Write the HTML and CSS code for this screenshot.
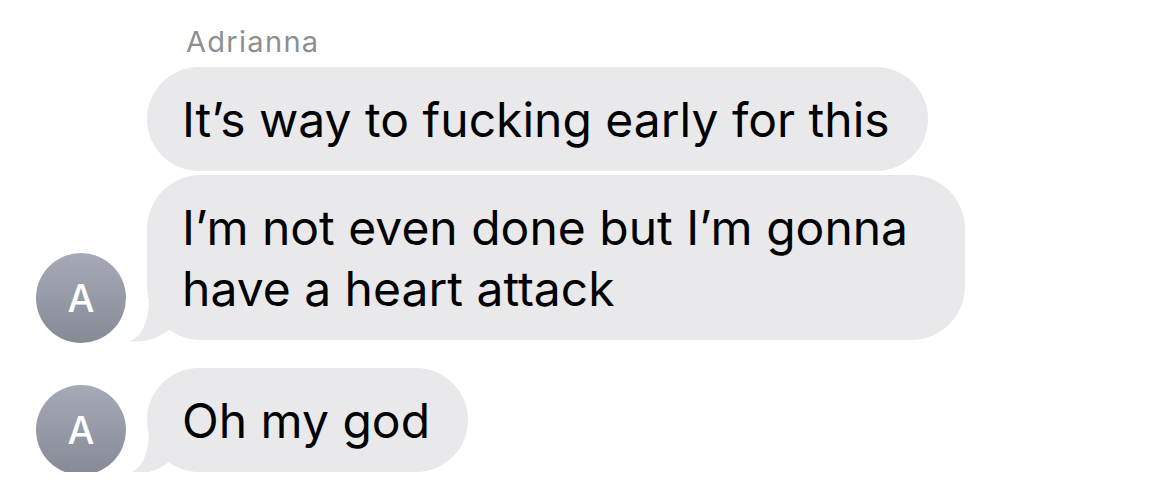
FILE: index.html
```html
<!DOCTYPE html>
<html lang="en">
<head>
<meta charset="utf-8">
<title>Messages</title>
<link rel="stylesheet" href="styles.css">
</head>
<body>
<div class="chat">
  <div class="sender">Adrianna</div>
  <div class="row">
    <div class="avatar-slot"></div>
    <div class="bubble">It’s way to fucking early for this</div>
  </div>
  <div class="row row-tight">
    <div class="avatar">A</div>
    <div class="bubble has-tail">I’m not even done but I’m gonna have a heart attack
      <svg class="tail" width="60" height="70" viewBox="-20 -62 60 70"><path d="M2 -62 L2 -44 C2 -17 -5 -4 -17 1 C-3 3 10 -1 22 -10 L22 -62 Z"/></svg>
    </div>
  </div>
  <div class="row row-gap">
    <div class="avatar">A</div>
    <div class="bubble has-tail">Oh my god
      <svg class="tail" width="60" height="70" viewBox="-20 -62 60 70"><path d="M2 -62 L2 -44 C2 -17 -5 -4 -17 1 C-3 3 10 -1 22 -10 L22 -62 Z"/></svg>
    </div>
  </div>
</div>
</body>
</html>
```
FILE: styles.css
```css
html, body {
  margin: 0;
  padding: 0;
  background: #ffffff;
}

.chat {
  padding-top: 22px;
  font-family: "Inter", "Liberation Sans", sans-serif;
}

.sender {
  margin-left: 186px;
  font-size: 29px;
  letter-spacing: 1.3px;
  line-height: 40px;
  color: #8e8e93;
  margin-bottom: 5px;
}

.row {
  display: flex;
  align-items: flex-end;
  gap: 21px;
  padding-left: 36px;
}

.row-tight {
  margin-top: 4px;
}

.row-gap {
  margin-top: 28px;
}

.avatar-slot {
  width: 90px;
  flex: none;
}

.avatar {
  width: 90px;
  height: 90px;
  flex: none;
  border-radius: 50%;
  background: linear-gradient(180deg, #a6aab7 0%, #868a95 100%);
  color: #ffffff;
  font-size: 38px;
  font-weight: 500;
  display: flex;
  align-items: center;
  justify-content: center;
  margin-bottom: -3px;
}

.bubble {
  position: relative;
  box-sizing: border-box;
  max-width: 818px;
  background: #e9e9eb;
  color: #000000;
  font-size: 48px;
  line-height: 61px;
  padding: 21.5px 38px 21.5px 35px;
  border-radius: 54px;
}

.tail {
  position: absolute;
  left: -20px;
  bottom: -8px;
  fill: #e9e9eb;
}
```
